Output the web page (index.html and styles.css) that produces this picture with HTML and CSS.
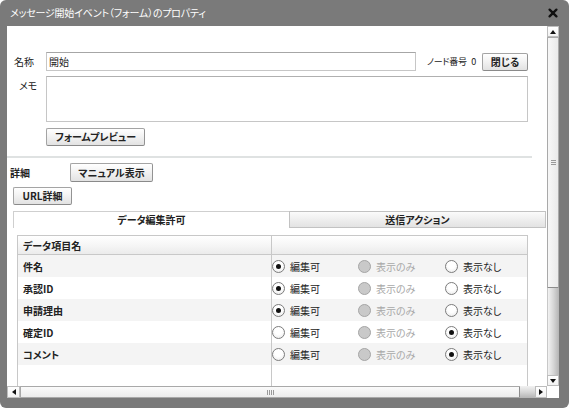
FILE: index.html
```html
<!DOCTYPE html>
<html lang="ja">
<head>
<meta charset="utf-8">
<title>メッセージ開始イベント（フォーム）のプロパティ</title>
<link rel="stylesheet" href="styles.css">
</head>
<body>
<div class="dialog">
  <div class="titlebar">
    <span class="title">メッセージ開始イベント（フォーム）のプロパティ</span>
    <svg class="close-x" viewBox="0 0 10 10" width="10" height="10"><path d="M1.6 1.6 L8.4 8.4 M8.4 1.6 L1.6 8.4" stroke="#111" stroke-width="2.3" stroke-linecap="round"/></svg>
  </div>
  <div class="frame">
    <div class="viewport">
      <div class="page">
        <div class="row name-row">
          <span class="lbl">名称</span>
          <div class="input">開始</div>
          <span class="node">ノード番号 0</span>
          <button class="btn btn-close">閉じる</button>
        </div>
        <div class="row memo-row">
          <span class="lbl memo-lbl">メモ</span>
          <div class="textarea"></div>
        </div>
        <div class="row preview-row">
          <button class="btn btn-preview">フォームプレビュー</button>
        </div>
        <div class="sep"></div>
        <div class="row detail-row">
          <span class="detail-lbl">詳細</span>
          <button class="btn btn-manual">マニュアル表示</button>
        </div>
        <div class="row url-row">
          <button class="btn btn-url">URL詳細</button>
        </div>
        <div class="tabs">
          <div class="tab tab-active">データ編集許可</div>
          <div class="tab tab-other">送信アクション</div>
        </div>
        <div class="table">
          <div class="thead">
            <div class="c1 th">データ項目名</div>
            <div class="c2 th"></div>
          </div>
          <div class="tr odd">
            <div class="c1">件名</div>
            <div class="c2 opts">
              <span class="opt"><span class="radio checked"></span>編集可</span>
              <span class="opt off"><span class="radio disabled"></span>表示のみ</span>
              <span class="opt"><span class="radio"></span>表示なし</span>
            </div>
          </div>
          <div class="tr">
            <div class="c1">承認ID</div>
            <div class="c2 opts">
              <span class="opt"><span class="radio checked"></span>編集可</span>
              <span class="opt off"><span class="radio disabled"></span>表示のみ</span>
              <span class="opt"><span class="radio"></span>表示なし</span>
            </div>
          </div>
          <div class="tr odd">
            <div class="c1">申請理由</div>
            <div class="c2 opts">
              <span class="opt"><span class="radio checked"></span>編集可</span>
              <span class="opt off"><span class="radio disabled"></span>表示のみ</span>
              <span class="opt"><span class="radio"></span>表示なし</span>
            </div>
          </div>
          <div class="tr">
            <div class="c1">確定ID</div>
            <div class="c2 opts">
              <span class="opt"><span class="radio"></span>編集可</span>
              <span class="opt off"><span class="radio disabled"></span>表示のみ</span>
              <span class="opt"><span class="radio checked"></span>表示なし</span>
            </div>
          </div>
          <div class="tr odd">
            <div class="c1">コメント</div>
            <div class="c2 opts">
              <span class="opt"><span class="radio"></span>編集可</span>
              <span class="opt off"><span class="radio disabled"></span>表示のみ</span>
              <span class="opt"><span class="radio checked"></span>表示なし</span>
            </div>
          </div>
          <div class="tr filler">
            <div class="c1"></div>
            <div class="c2"></div>
          </div>
        </div>
      </div>
    </div>
    <div class="vscroll">
      <div class="sbtn"><svg viewBox="0 0 6 4" width="6" height="4"><path d="M0 4 L3 0 L6 4 Z" fill="#111"/></svg></div>
      <div class="vthumb"><svg viewBox="0 0 5 5" width="5" height="5"><path d="M0 0.5 H5 M0 2.5 H5 M0 4.5 H5" stroke="#999" stroke-width="1"/></svg></div>
      <div class="vtrack"></div>
      <div class="sbtn"><svg viewBox="0 0 6 4" width="6" height="4"><path d="M0 0 L3 4 L6 0 Z" fill="#111"/></svg></div>
    </div>
    <div class="hscroll">
      <div class="sbtn"><svg viewBox="0 0 4 6" width="4" height="6"><path d="M4 0 L0 3 L4 6 Z" fill="#111"/></svg></div>
      <div class="hthumb"><svg viewBox="0 0 7 5" width="7" height="5"><path d="M0.5 0 V5 M2.5 0 V5 M4.5 0 V5 M6.5 0 V5" stroke="#999" stroke-width="1"/></svg></div>
      <div class="htrack"></div>
      <div class="sbtn"><svg viewBox="0 0 4 6" width="4" height="6"><path d="M0 0 L4 3 L0 6 Z" fill="#111"/></svg></div>
    </div>
    <div class="corner"></div>
  </div>
</div>
</body>
</html>
```

FILE: styles.css
```css
* { box-sizing: border-box; }

html, body {
  margin: 0;
  padding: 0;
  background: #ffffff;
}

body {
  font-family: "Noto Sans CJK JP", "Noto Sans", sans-serif;
  font-size: 10px;
  color: #222;
  font-feature-settings: "palt";
}

.dialog {
  width: 569px;
  height: 408px;
  background: #7a7a7a;
  border-radius: 6px;
  display: flex;
  flex-direction: column;
  overflow: hidden;
}

.titlebar {
  height: 26px;
  flex: none;
  display: flex;
  align-items: center;
  justify-content: space-between;
  padding: 0 11px 1px 10px;
  color: #fff;
}

.title {
  font-size: 10px;
  letter-spacing: -0.2px;
}

.close-x { display: block; }

.frame {
  display: grid;
  grid-template-columns: 540px 12px;
  grid-template-rows: 360px 12px;
  margin: 0 10px 10px 7px;
}

.viewport {
  background: #fff;
  overflow: hidden;
}

.page {
  width: 560px;
  padding-top: 26px;
}

.row {
  display: flex;
  align-items: center;
}

.lbl {
  width: 39px;
  padding-left: 7px;
  flex: none;
}

.name-row {
  height: 19px;
  width: 521px;
}

.input {
  width: 370px;
  height: 19px;
  border: 1px solid #c6c6c6;
  border-top-color: #a6a6a6;
  padding: 0 0 0 2px;
  line-height: 17px;
  flex: none;
}

.node {
  margin-left: 11px;
  white-space: nowrap;
  font-size: 9px;
  letter-spacing: -0.3px;
  word-spacing: 3px;
  flex: none;
}

.btn {
  font-family: inherit;
  font-feature-settings: "palt";
  font-size: 10px;
  font-weight: bold;
  color: #222;
  height: 18px;
  padding: 0;
  border: 1px solid #a4a4a4;
  border-bottom-color: #8a8a8a;
  border-right-color: #939393;
  border-radius: 2px;
  background: linear-gradient(#ffffff, #f3f3f3 45%, #e2e2e2);
  flex: none;
  line-height: 16px;
}

.btn-close {
  width: 46px;
  margin-left: auto;
}

.memo-row {
  margin-top: 5px;
  align-items: flex-start;
}

.memo-lbl {
  padding-left: 12px;
  padding-top: 2px;
}

.textarea {
  width: 482px;
  height: 46px;
  border: 1px solid #c6c6c6;
  border-top-color: #b0b0b0;
  flex: none;
}

.preview-row {
  margin-top: 6px;
  padding-left: 39px;
}

.btn-preview { width: 99px; }

.sep {
  margin-top: 10px;
  width: 525px;
  height: 2px;
  background: #dfe2e2;
}

.detail-row {
  margin-top: 5px;
  height: 19px;
}

.detail-lbl {
  width: 63px;
  padding-left: 3px;
  font-weight: bold;
  flex: none;
}

.btn-manual {
  width: 83px;
  height: 19px;
}

.url-row {
  margin-top: 5px;
  padding-left: 6px;
}

.btn-url { width: 59px; }

.tabs {
  margin-top: 6px;
  margin-left: 6px;
  display: flex;
  height: 17px;
}

.tab {
  height: 17px;
  font-weight: bold;
  text-align: center;
  line-height: 16px;
  flex: none;
}

.tab-active {
  width: 276px;
  background: #fff;
  border-top: 1px solid #cfcfcf;
  border-left: 1px solid #cfcfcf;
}

.tab-other {
  width: 257px;
  background: linear-gradient(#fbfbfb, #ececec 60%, #e3e3e3);
  border: 1px solid #c2c2c2;
}

.table {
  margin-top: 7px;
  margin-left: 10px;
  width: 511px;
  border: 1px solid #c8c8c8;
  border-bottom: none;
}

.thead {
  display: flex;
  height: 19px;
  background: linear-gradient(#ffffff, #f6f6f6 50%, #ebebeb);
  border-bottom: 1px solid #c8c8c8;
}

.tr {
  display: flex;
  height: 22px;
  background: #fff;
}

.tr.odd { background: #f4f4f4; }

.tr.filler {
  height: 40px;
  background: #fff;
}

.c1 {
  width: 254px;
  flex: none;
  padding-left: 5px;
  border-right: 1px solid #c8c8c8;
  display: flex;
  align-items: center;
  font-weight: bold;
}

.th {
  font-weight: bold;
}

.c2 {
  flex: 1;
  display: flex;
  align-items: center;
}

.opts {
  display: grid;
  grid-template-columns: 86px 87px auto;
  align-items: center;
}

.opt {
  display: flex;
  align-items: center;
}

.opt.off { color: #a8a8a8; }

.radio {
  width: 13px;
  height: 13px;
  border-radius: 50%;
  border: 1px solid #7c7c7c;
  background: radial-gradient(circle at 50% 35%, #ffffff 40%, #e6e6e6);
  margin-right: 5px;
  display: flex;
  align-items: center;
  justify-content: center;
  flex: none;
}

.radio.checked::after {
  content: "";
  width: 5px;
  height: 5px;
  border-radius: 50%;
  background: #111;
}

.radio.disabled {
  background: #c9c9c9;
  border-color: #a5a5a5;
}

/* scrollbars */
.vscroll {
  display: grid;
  grid-template-rows: 11px 251px 87px 11px;
  background: #eaeaea;
}

.hscroll {
  display: grid;
  grid-template-columns: 13px 500px 15px 12px;
  background: #eaeaea;
}

.sbtn {
  background: linear-gradient(#ffffff, #f2f2f2);
  border: 1px solid #bdbdbd;
  display: flex;
  align-items: center;
  justify-content: center;
}

.sbtn svg { display: block; }

.vthumb {
  background: linear-gradient(to right, #f7f7f7, #e9e9e9);
  border: 1px solid #a9a9a9;
  border-bottom-color: #8c8c8c;
  border-radius: 1px;
  display: flex;
  align-items: center;
  justify-content: center;
}

.vtrack {
  background: linear-gradient(to right, #f2f2f2, #d6d6d6 50%, #b4b4b4);
  border-left: 1px solid #c8c8c8;
}

.hthumb {
  background: linear-gradient(#fbfbfb, #ececec);
  border: 1px solid #a9a9a9;
  border-right-color: #8c8c8c;
  border-radius: 1px;
  display: flex;
  align-items: center;
  justify-content: center;
}

.htrack {
  background: linear-gradient(#f2f2f2, #d6d6d6 50%, #b4b4b4);
}

.corner { background: #fff; }
```
